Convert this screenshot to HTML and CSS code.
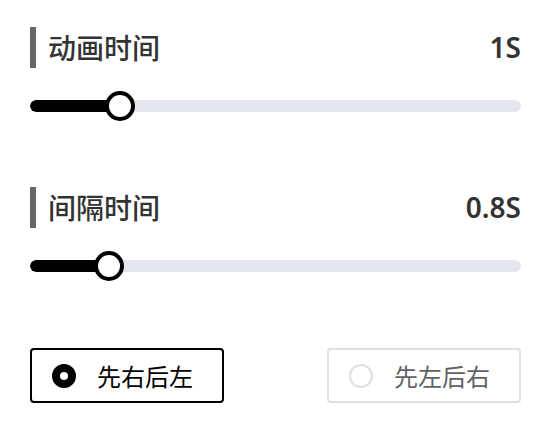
FILE: index.html
```html
<!DOCTYPE html>
<html lang="zh">
<head>
<meta charset="utf-8">
<link rel="stylesheet" href="styles.css">
</head>
<body>
<div class="panel">
  <div class="section">
    <div class="header">
      <span class="bar"></span>
      <span class="title">动画时间</span>
      <span class="value">1S</span>
    </div>
    <div class="slider">
      <div class="track">
        <div class="fill" style="width: 90px"></div>
      </div>
      <div class="thumb" style="left: 75px"></div>
    </div>
  </div>
  <div class="section second">
    <div class="header">
      <span class="bar"></span>
      <span class="title">间隔时间</span>
      <span class="value">0.8S</span>
    </div>
    <div class="slider">
      <div class="track">
        <div class="fill" style="width: 79px"></div>
      </div>
      <div class="thumb" style="left: 64px"></div>
    </div>
  </div>
  <div class="options">
    <div class="option checked">
      <span class="radio"></span>
      <span class="label">先右后左</span>
    </div>
    <div class="option">
      <span class="radio"></span>
      <span class="label">先左后右</span>
    </div>
  </div>
</div>
</body>
</html>
```
FILE: styles.css
```css
html, body {
  margin: 0;
  padding: 0;
  background: #ffffff;
}
body {
  font-family: "Noto Sans", "Noto Sans CJK SC", sans-serif;
  width: 556px;
  height: 424px;
  overflow: hidden;
}
.panel {
  padding: 27px 35px 0 30px;
  display: flex;
  flex-direction: column;
}
.header {
  display: flex;
  align-items: center;
  height: 41px;
}
.bar {
  width: 6px;
  height: 41px;
  background: #666666;
}
.title {
  margin-left: 12px;
  font-family: "Noto Sans CJK SC", sans-serif;
  font-size: 28px;
  font-weight: 500;
  color: #333333;
  line-height: 41px;
  flex: 1;
}
.value {
  font-size: 28px;
  font-weight: 600;
  color: #333333;
  line-height: 41px;
}
.slider {
  position: relative;
  height: 30px;
  margin-top: 23px;
  display: flex;
  align-items: center;
}
.track {
  flex: 1;
  height: 12px;
  border-radius: 6px;
  background: #e4e7ef;
  overflow: hidden;
}
.fill {
  height: 12px;
  background: #000000;
  border-radius: 6px;
}
.thumb {
  position: absolute;
  top: 0;
  width: 30px;
  height: 30px;
  box-sizing: border-box;
  border: 4px solid #000000;
  border-radius: 50%;
  background: #ffffff;
}
.second {
  margin-top: 66px;
}
.options {
  margin-top: 67px;
  display: flex;
  justify-content: space-between;
}
.option {
  box-sizing: border-box;
  width: 194px;
  height: 55px;
  border: 2px solid #dcdfe6;
  border-radius: 4px;
  display: flex;
  align-items: center;
  padding-left: 20px;
}
.option.checked {
  border-color: #000000;
}
.radio {
  box-sizing: border-box;
  width: 24px;
  height: 24px;
  border-radius: 50%;
  border: 2px solid #dcdfe6;
  background: #ffffff;
}
.option.checked .radio {
  border: 8px solid #000000;
}
.label {
  margin-left: 21px;
  font-family: "Noto Sans CJK SC", sans-serif;
  font-size: 24px;
  color: #606266;
  line-height: 30px;
}
.option.checked .label {
  color: #000000;
}
```
